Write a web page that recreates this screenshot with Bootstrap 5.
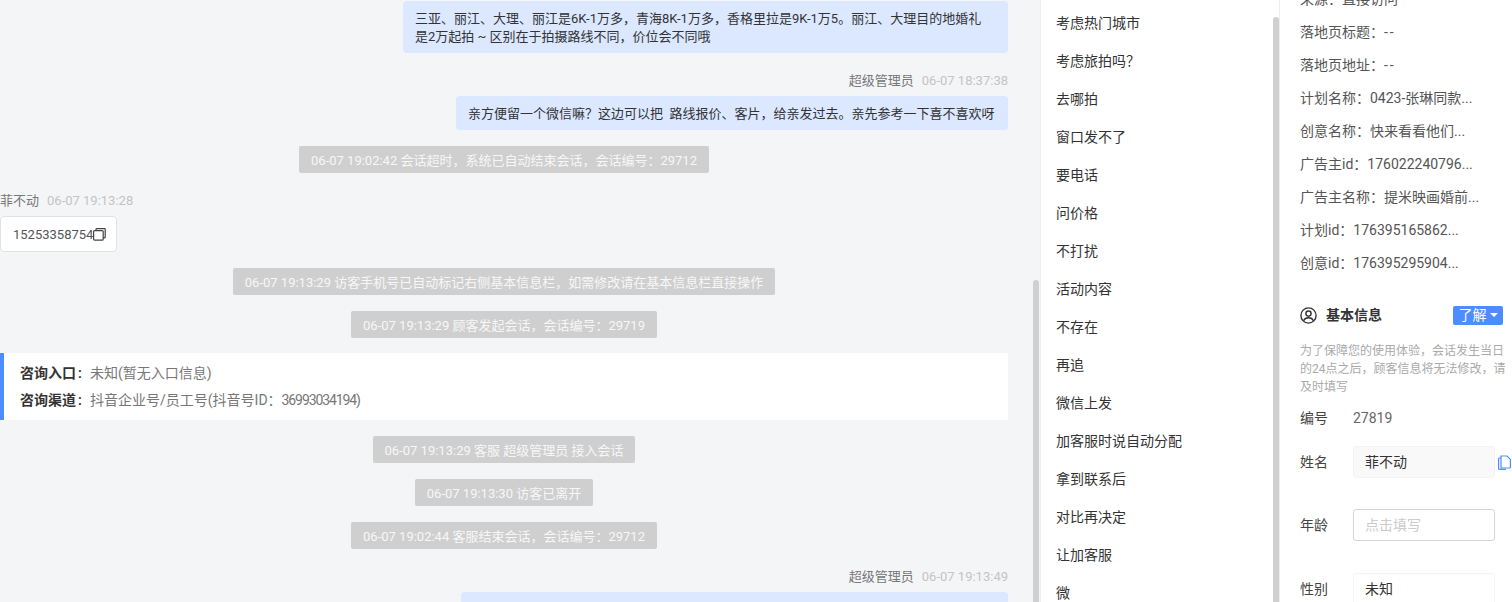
<!DOCTYPE html>
<html lang="zh-CN">
<head>
<meta charset="utf-8">
<title>会话</title>
<link href="https://cdn.jsdelivr.net/npm/bootstrap@5.3.0/dist/css/bootstrap.min.css" rel="stylesheet">
<style>
html,body{height:602px;overflow:hidden;}
body{font-family:Roboto,"Noto Sans CJK SC",sans-serif;font-size:13px;color:#333;background:#fff;}
.shell{height:602px;overflow:hidden;}
.chat-pane{width:1040px;flex:none;background:#f4f5f7;position:relative;overflow:hidden;}
.chat-flow{width:1008px;padding-top:1px;}
.bubble{background:#dce8ff;border-radius:4px;padding:9px 12px 7px;line-height:18px;color:#333;}
.b1{width:605px;height:52px;padding-right:24px;}
.b2{width:552px;height:34px;white-space:nowrap;}
.b3{width:547px;height:34px;}
.who{height:18px;line-height:20px;color:#777;margin-top:18px;margin-bottom:7px;}
.who .stamp{color:#c4c4c4;margin-left:8px;}
.pill{background:#cfcfcf;color:#f7f7f7;height:27px;line-height:29px;padding:0 12px;border-radius:2px;white-space:nowrap;}
.phone{background:#fff;border:1px solid #e2e2e2;border-radius:4px;width:117px;height:36px;padding:2px 12px 0;color:#555;}
.phone svg{flex:none;margin-bottom:2px;}
.source{background:#fff;border-left:4px solid #4d8dff;height:67px;margin-top:15px;padding:7px 16px;line-height:27px;color:#777;font-size:14px;}
.source b{display:inline-block;width:70px;color:#333;font-weight:600;}
.source i{font-style:normal;margin-left:2px;}
.tight-num{letter-spacing:-1.1px;}
.dash{letter-spacing:2px;}
.bar{position:absolute;width:6px;background:#d0d0d0;border-radius:3px 3px 0 0;bottom:0;}
.bar-chat{left:1033px;top:280px;}
.bar-list{left:232px;top:17px;}
.list-pane{width:240px;flex:none;position:relative;overflow:hidden;border-left:1px solid #f0f0f0;border-right:1px solid #eee;font-size:14px;}
.phrase{height:38px;line-height:38px;padding-left:15px;color:#333;}
.phrases{margin-top:4px;}
.side-pane{flex:1 1 auto;overflow:hidden;padding-left:20px;font-size:14px;}
.facts{margin-top:-17px;}
.fact{height:33px;line-height:33px;color:#555;white-space:nowrap;}
.head{margin-top:25px;height:20px;width:203px;}
.head strong{font-weight:600;color:#333;margin-left:9px;}
.know{background:#4d8dff;color:#fff;width:50px;height:19px;line-height:19px;border-radius:2px;text-align:center;font-size:14px;padding:0;border:0;}
.caret-down{display:inline-block;border:4px solid transparent;border-top-color:#fff;border-bottom:0;vertical-align:3px;margin-left:3px;}
.tip{font-size:12px;line-height:18px;color:#aaa;width:208px;margin-top:17px;}
.field{min-height:32px;}
.label-cell{width:53px;flex:none;color:#444;}
.f1{margin-top:12px;height:20px;line-height:20px;color:#666;}
.f2{margin-top:18px;}
.f3{margin-top:31px;}
.f4{margin-top:32px;}
.val{width:142px;height:32px;line-height:30px;padding:0 11px;border-radius:3px;border:1px solid #f3f3f3;color:#333;}
.val-fill{background:#f9f9f9;}
.val-empty{border-color:#d6d6d6;color:#ccc;}
.copy-blue{margin-left:3px;flex:none;}
</style>
</head>
<body>
<div class="shell d-flex">
  <main class="chat-pane">
    <div class="chat-flow d-flex flex-column">
      <div class="d-flex justify-content-end"><div class="bubble b1">三亚、丽江、大理、丽江是6K-1万多，青海8K-1万多，香格里拉是9K-1万5。丽江、大理目的地婚礼是2万起拍 ~ 区别在于拍摄路线不同，价位会不同哦</div></div>
      <div class="who text-end">超级管理员<span class="stamp">06-07 18:37:38</span></div>
      <div class="d-flex justify-content-end"><div class="bubble b2">亲方便留一个微信嘛？这边可以把&nbsp; 路线报价、客片，给亲发过去。亲先参考一下喜不喜欢呀</div></div>
      <div class="d-flex justify-content-center mt-3"><div class="pill">06-07 19:02:42 会话超时，系统已自动结束会话，会话编号：29712</div></div>
      <div class="who">菲不动<span class="stamp">06-07 19:13:28</span></div>
      <div class="phone d-flex align-items-center">15253358754<svg width="13" height="13" viewBox="0 0 13 13" fill="none" stroke="#444" stroke-width="1.2"><rect x="0.6" y="2.6" width="9.6" height="9.6" rx="1"/><path d="M3 2.4V1.2a.6.6 0 0 1 .6-.6h8a.6.6 0 0 1 .6.6v8a.6.6 0 0 1-.6.6h-1.6"/></svg></div>
      <div class="d-flex justify-content-center mt-3"><div class="pill">06-07 19:13:29 访客手机号已自动标记右侧基本信息栏，如需修改请在基本信息栏直接操作</div></div>
      <div class="d-flex justify-content-center mt-3"><div class="pill">06-07 19:13:29 顾客发起会话，会话编号：29719</div></div>
      <div class="source"><div><b>咨询入口<i>:</i></b>未知(暂无入口信息)</div><div><b>咨询渠道<i>:</i></b>抖音企业号/员工号(抖音号ID：<span class="tight-num">36993034194</span>)</div></div>
      <div class="d-flex justify-content-center mt-3"><div class="pill">06-07 19:13:29 客服 超级管理员 接入会话</div></div>
      <div class="d-flex justify-content-center mt-3"><div class="pill">06-07 19:13:30 访客已离开</div></div>
      <div class="d-flex justify-content-center mt-3"><div class="pill">06-07 19:02:44 客服结束会话，会话编号：29712</div></div>
      <div class="who text-end">超级管理员<span class="stamp">06-07 19:13:49</span></div>
      <div class="d-flex justify-content-end"><div class="bubble b3"></div></div>
    </div>
    <div class="bar bar-chat"></div>
  </main>
  <nav class="list-pane">
    <div class="phrases">
      <div class="phrase">考虑热门城市</div>
      <div class="phrase">考虑旅拍吗？</div>
      <div class="phrase">去哪拍</div>
      <div class="phrase">窗口发不了</div>
      <div class="phrase">要电话</div>
      <div class="phrase">问价格</div>
      <div class="phrase">不打扰</div>
      <div class="phrase">活动内容</div>
      <div class="phrase">不存在</div>
      <div class="phrase">再追</div>
      <div class="phrase">微信上发</div>
      <div class="phrase">加客服时说自动分配</div>
      <div class="phrase">拿到联系后</div>
      <div class="phrase">对比再决定</div>
      <div class="phrase">让加客服</div>
      <div class="phrase">微</div>
    </div>
    <div class="bar bar-list"></div>
  </nav>
  <aside class="side-pane">
    <div class="facts">
      <div class="fact">来源：直接访问</div>
      <div class="fact">落地页标题：<span class="dash">--</span></div>
      <div class="fact">落地页地址：<span class="dash">--</span></div>
      <div class="fact">计划名称：0423-张琳同款...</div>
      <div class="fact">创意名称：快来看看他们...</div>
      <div class="fact">广告主id：176022240796...</div>
      <div class="fact">广告主名称：提米映画婚前...</div>
      <div class="fact">计划id：176395165862...</div>
      <div class="fact">创意id：176395295904...</div>
    </div>
    <div class="head d-flex align-items-center justify-content-between">
      <div class="d-flex align-items-center"><svg width="17" height="17" viewBox="0 0 17 17" fill="none" stroke="#333" stroke-width="1.4"><circle cx="8.5" cy="8.5" r="7.6"/><circle cx="8.5" cy="6.6" r="2.6"/><path d="M3.6 13.8c.8-2 2.7-3 4.9-3s4.100 1 4.900 3"/></svg><strong>基本信息</strong></div>
      <button type="button" class="btn know">了解<span class="caret-down"></span></button>
    </div>
    <div class="tip">为了保障您的使用体验，会话发生当日的24点之后，顾客信息将无法修改，请及时填写</div>
    <div class="d-flex f1"><div class="label-cell">编号</div><div>27819</div></div>
    <div class="d-flex align-items-center f2 field"><div class="label-cell">姓名</div><div class="val val-fill">菲不动</div><svg class="copy-blue" width="13" height="15" viewBox="0 0 13 15" fill="none" stroke="#4d8dff" stroke-width="1.2"><path d="M3 1h6l3.400 3.400V12a1 1 0 0 1-1 1H3z" fill="#fff"/><path d="M3 3H1.600a1 1 0 0 0-1 1v9.400a1 1 0 0 0 1 1H8"/></svg></div>
    <div class="d-flex align-items-center f3 field"><div class="label-cell">年龄</div><div class="val val-empty">点击填写</div></div>
    <div class="d-flex align-items-center f4 field"><div class="label-cell">性别</div><div class="val">未知</div></div>
  </aside>
</div>
</body>
</html>
